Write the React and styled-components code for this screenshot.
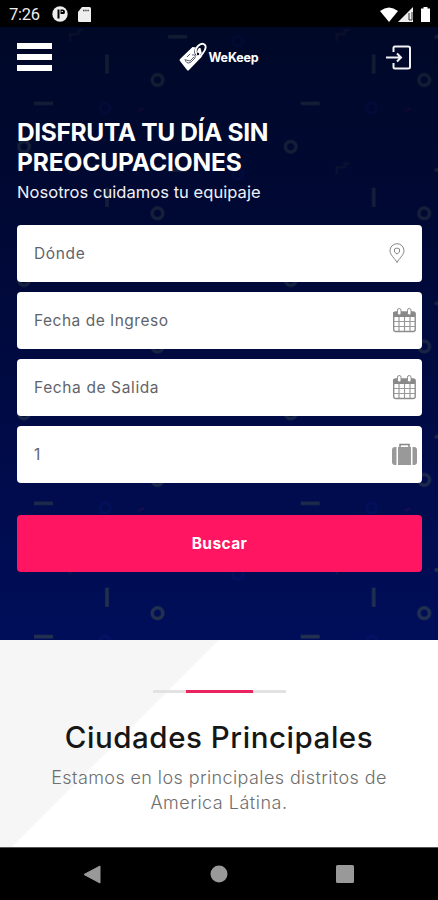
import React from "react";
import styled, { createGlobalStyle } from "styled-components";

const Global = createGlobalStyle`
  * { box-sizing: border-box; }
  body { margin: 0; background: #000; font-family: Inter, "Open Sans", sans-serif; }
`;

const Screen = styled.div`
  width: 438px;
  height: 900px;
  display: flex;
  flex-direction: column;
  overflow: hidden;
`;

const StatusBar = styled.div`
  height: 27px;
  flex: none;
  background: #000;
  display: flex;
  align-items: center;
  padding: 1px 8px 0 9px;
  color: #ededed;
`;

const Clock = styled.span`
  font: 400 16.5px Roboto, sans-serif;
  letter-spacing: -0.3px;
  width: 43px;
`;

const StatusIcon = styled.svg`
  flex: none;
  margin-left: ${(p) => p.$gap || "0"};
`;

const Hero = styled.section`
  position: relative;
  height: 613px;
  flex: none;
  background: linear-gradient(#000828, #000936 35%, #000e5a);
  padding: 0 16px 0 17px;
`;

const Pattern = styled.svg`
  position: absolute;
  inset: 0;
`;

const HeroContent = styled.div`
  position: relative;
  display: flex;
  flex-direction: column;
`;

const Header = styled.header`
  height: 60px;
  display: flex;
  align-items: center;
  justify-content: space-between;
`;

const Menu = styled.button`
  width: 35px;
  height: 28px;
  padding: 0;
  border: 0;
  background: none;
  display: flex;
  flex-direction: column;
  justify-content: space-between;
`;

const MenuLine = styled.span`
  height: 6px;
  width: 35px;
  background: #fff;
`;

const Brand = styled.div`
  display: flex;
  align-items: center;
  gap: 1px;
  margin-right: 0;
  color: #fff;
  font-size: 12.5px;
  font-weight: 700;
  letter-spacing: -0.15px;
`;

const BrandName = styled.span`
  padding-top: 1px;
`;

const LoginIcon = styled.svg`
  margin-right: 10px;
`;

const Title = styled.h1`
  margin: 31px 0 0;
  color: #fff;
  font-size: 24.5px;
  line-height: 29.5px;
  font-weight: 700;
  white-space: nowrap;
`;

const TitleLine = styled.span`
  display: block;
  letter-spacing: ${(p) => p.$track};
`;

const Lead = styled.p`
  margin: 2px 0 0;
  color: #f1f1f7;
  font-size: 16.5px;
  line-height: 26px;
  letter-spacing: ${(p) => p.$track};
`;

const Form = styled.form`
  display: flex;
  flex-direction: column;
  gap: 10px;
  margin-top: 20px;
`;

const Field = styled.label`
  height: 57px;
  border-radius: 4px;
  background: #fff;
  display: flex;
  align-items: center;
  justify-content: space-between;
  padding: 0 ${(p) => p.$inset || "5px"} 1px 17px;
  color: #5f646b;
  font-size: 15.5px;
`;

const FieldText = styled.span`
  letter-spacing: ${(p) => p.$track || "0"};
`;

const Submit = styled.button`
  height: 57px;
  margin-top: 22px;
  border: 0;
  border-radius: 4px;
  background: #ff1561;
  color: #fff;
  font: 700 15.5px Inter, sans-serif;
  letter-spacing: 0.4px;
`;

const Cities = styled.section`
  flex: 1;
  background: #fff;
  position: relative;
  display: flex;
  flex-direction: column;
  align-items: center;
`;

const Wedge = styled.div`
  position: absolute;
  inset: 0;
  background: #f6f6f6;
  clip-path: polygon(0 0, 219px 0, 12px 207px, 0 207px);
`;

const Rule = styled.div`
  position: relative;
  width: 133px;
  height: 3px;
  margin-top: 50px;
  background: linear-gradient(90deg, #e2e2e2 33px, #e9245f 33px 100px, #e2e2e2 100px);
`;

const Heading = styled.h2`
  position: relative;
  margin: 24px 0 0;
  color: #161616;
  font-size: 29.5px;
  line-height: 40px;
  font-weight: 500;
  letter-spacing: ${(p) => p.$track};
`;

const Copy = styled.p`
  position: relative;
  margin: ${(p) => p.$top || "0"} 0 0;
  color: #6e6e6e;
  font-size: 18px;
  line-height: 25px;
  font-weight: 300;
  letter-spacing: ${(p) => p.$track};
`;

const NavBar = styled.nav`
  height: 53px;
  flex: none;
  background: #000;
  border-top: 1px solid #555;
  display: flex;
  justify-content: space-between;
  align-items: center;
  padding: 0 84px 0 83px;
`;

const Confetti = () => (
  <Pattern width="438" height="613">
    <defs>
      <pattern id="confetti" width="266.7" height="133.3" patternUnits="userSpaceOnUse" y="-27">
        <g fill="none" stroke="#3c4b48" strokeWidth="3.5">
          <circle cx="157.5" cy="80" r="5.3" />
          <circle cx="24" cy="13.5" r="5.3" />
          <path d="M107 54.500v19M34 103.500h19M168 36.800h19" />
          <path d="M70 41v-7h7M78 35v-5h5" stroke="#302e38" strokeWidth="2.500" opacity=".6" />
        </g>
        <path d="M138 111l6-3" stroke="#791057" strokeWidth="2" fill="none" opacity=".45" />
        <circle cx="238" cy="41" r="5" stroke="#1025a8" strokeWidth="3" fill="none" opacity=".3" />
        <circle cx="105" cy="108" r="5" stroke="#1025a8" strokeWidth="3" fill="none" opacity=".3" />
      </pattern>
      <linearGradient id="fade" x2="0" y2="1">
        <stop stopColor="#fff" stopOpacity=".3" />
        <stop offset=".65" stopColor="#fff" stopOpacity=".42" />
        <stop offset="1" stopColor="#fff" stopOpacity=".6" />
      </linearGradient>
      <mask id="fadeMask"><rect width="438" height="613" fill="url(#fade)" /></mask>
    </defs>
    <rect width="438" height="613" fill="url(#confetti)" mask="url(#fadeMask)" />
  </Pattern>
);

const Tag = () => (
  <svg width="28" height="30" viewBox="0 0 28 30">
    <path d="M1 17 13.500 5l8 1 2 8L10 28q-1 1-2 0L1 19q-1-1 0-2Z" fill="#fff" />
    <path d="M18 13q-3-4 1-8t7-1q2 3-2 8l-2 2" fill="none" stroke="#000927" strokeWidth="2.800" />
    <path d="M18 13q-3-5 1-9t7-1q2 3-2 8l-3 4" fill="none" stroke="#fff" strokeWidth="1.900" />
    <path d="M6 17q1 6 6 3l4-4q1-4-3-3M7 18l4 1 4-4M8 15l3-3" fill="none" stroke="#30344d" strokeWidth=".8" />
    <circle cx="19" cy="12" r="1.200" fill="#000927" />
  </svg>
);

const Calendar = () => (
  <svg width="25" height="26" viewBox="0 0 25 26">
    <path d="M1 5h22v5H1z" fill="#888" />
    <rect x="1.700" y="5" width="21.500" height="19.500" rx="2" fill="none" stroke="#8c8c8c" strokeWidth="1.400" />
    <path d="M2 14.500h21M2 19.500h21M7 10v14M12.500 10v14M18 10v14" stroke="#999" strokeWidth="1.200" />
    <rect x="5.500" y="1.500" width="3.500" height="6.500" rx="1.700" fill="#fff" stroke="#8c8c8c" />
    <rect x="15.500" y="1.500" width="3.500" height="6.500" rx="1.700" fill="#fff" stroke="#8c8c8c" />
  </svg>
);

const Pin = () => (
  <svg width="16" height="20" viewBox="0 -1 16 20" fill="none" stroke="#858585">
    <path d="M8 18.500C6 14.500 1 11 1 6.700A7 7 0 0 1 15 6.700C15 11 10 14.500 8 18.500Z" />
    <path d="M5.500 5 8 4l2.500 1v3L8 10 5.500 8Z" />
  </svg>
);

const Suitcase = () => (
  <svg width="25" height="23" viewBox="0 0 25 23">
    <path d="M8 5V1.500h9V5" fill="none" stroke="#858585" strokeWidth="1.500" />
    <path d="M6 4h13v18H6z" fill="#999" />
    <path d="M4.500 4v18H3q-3 0-3-3V7q0-3 3-3ZM20.500 4v18H22q3 0 3-3V7q0-3-3-3Z" fill="#999" />
  </svg>
);

export default function App() {
  return (
    <Screen>
      <Global />
      <StatusBar>
        <Clock>7:26</Clock>
        <StatusIcon width="16" height="16" viewBox="0 0 16 16">
          <circle cx="8" cy="8" r="7.700" fill="#eee" />
          <path d="M6.500 3.500v9" stroke="#000" strokeWidth="2" />
          <path d="M8.500 3.500H11q2 0 2 2.500t-2 2H8.500Z" fill="#000" />
          <path d="M9.500 5.500h1.500" stroke="#eee" />
        </StatusIcon>
        <StatusIcon $gap="10px" width="13" height="15" viewBox="0 0 13 15">
          <path d="M4 0h7.500Q13 0 13 1.500V15H1.500Q0 15 0 13.500V5Z" fill="#eee" />
          <path d="M5 3.500h6" stroke="#444" strokeWidth="1.500" strokeDasharray="1.500 .7" />
        </StatusIcon>
        <StatusIcon $gap="auto" width="18" height="15" viewBox="0 0 18 15">
          <path d="M0 4Q9-3 18 4L9 15Z" fill="#fff" />
        </StatusIcon>
        <StatusIcon width="16" height="15" viewBox="0 0 16 15">
          <path d="M15 0v15H0Z" fill="#eee" />
          <path d="M11 6v7h3V5" stroke="#333" fill="none" />
        </StatusIcon>
        <StatusIcon $gap="7px" width="9" height="15" viewBox="0 0 9 15">
          <path d="M2.500 0h4v1.500H9V15H0V1.500h2.500Z" fill="#fff" />
        </StatusIcon>
      </StatusBar>
      <Hero>
        <Confetti />
        <HeroContent>
          <Header>
            <Menu type="button" aria-label="Menú"><MenuLine /><MenuLine /><MenuLine /></Menu>
            <Brand><Tag /><BrandName>WeKeep</BrandName></Brand>
            <LoginIcon width="26" height="25" viewBox="0 0 26 25" fill="none" stroke="#f2f2f5" strokeWidth="2">
              <path d="M7.500 7V3q0-1.500 1.500-1.500h13Q24 1.500 24 3v19q0 1.500-2 1.500H9Q7.500 23.500 7.500 22v-4M0 12.500h15M11 8.500l4 4-4 4" />
            </LoginIcon>
          </Header>
          <Title>
            <TitleLine $track="-0.35px">DISFRUTA TU DÍA SIN</TitleLine>
            <TitleLine $track="-0.12px">PREOCUPACIONES</TitleLine>
          </Title>
          <Lead $track="0.05px">Nosotros cuidamos tu equipaje</Lead>
          <Form>
            <Field $inset="17px"><FieldText $track="0.65px">Dónde</FieldText><Pin /></Field>
            <Field><FieldText $track="0.5px">Fecha de Ingreso</FieldText><Calendar /></Field>
            <Field><FieldText $track="0.62px">Fecha de Salida</FieldText><Calendar /></Field>
            <Field><FieldText>1</FieldText><Suitcase /></Field>
            <Submit type="button">Buscar</Submit>
          </Form>
        </HeroContent>
      </Hero>
      <Cities>
        <Wedge />
        <Rule />
        <Heading $track="0.55px">Ciudades Principales</Heading>
        <Copy $top="8px" $track="0.4px">Estamos en los principales distritos de</Copy>
        <Copy $track="0.5px">America Látina.</Copy>
      </Cities>
      <NavBar>
        <svg width="18" height="19" viewBox="0 0 18 19"><path d="M17 1v17L1 9.500Z" fill="#999" stroke="#999" strokeLinejoin="round" /></svg>
        <svg width="18" height="18"><circle cx="9" cy="9" r="8.500" fill="#999" /></svg>
        <svg width="18" height="18"><rect width="18" height="18" rx="1.500" fill="#999" /></svg>
      </NavBar>
    </Screen>
  );
}
